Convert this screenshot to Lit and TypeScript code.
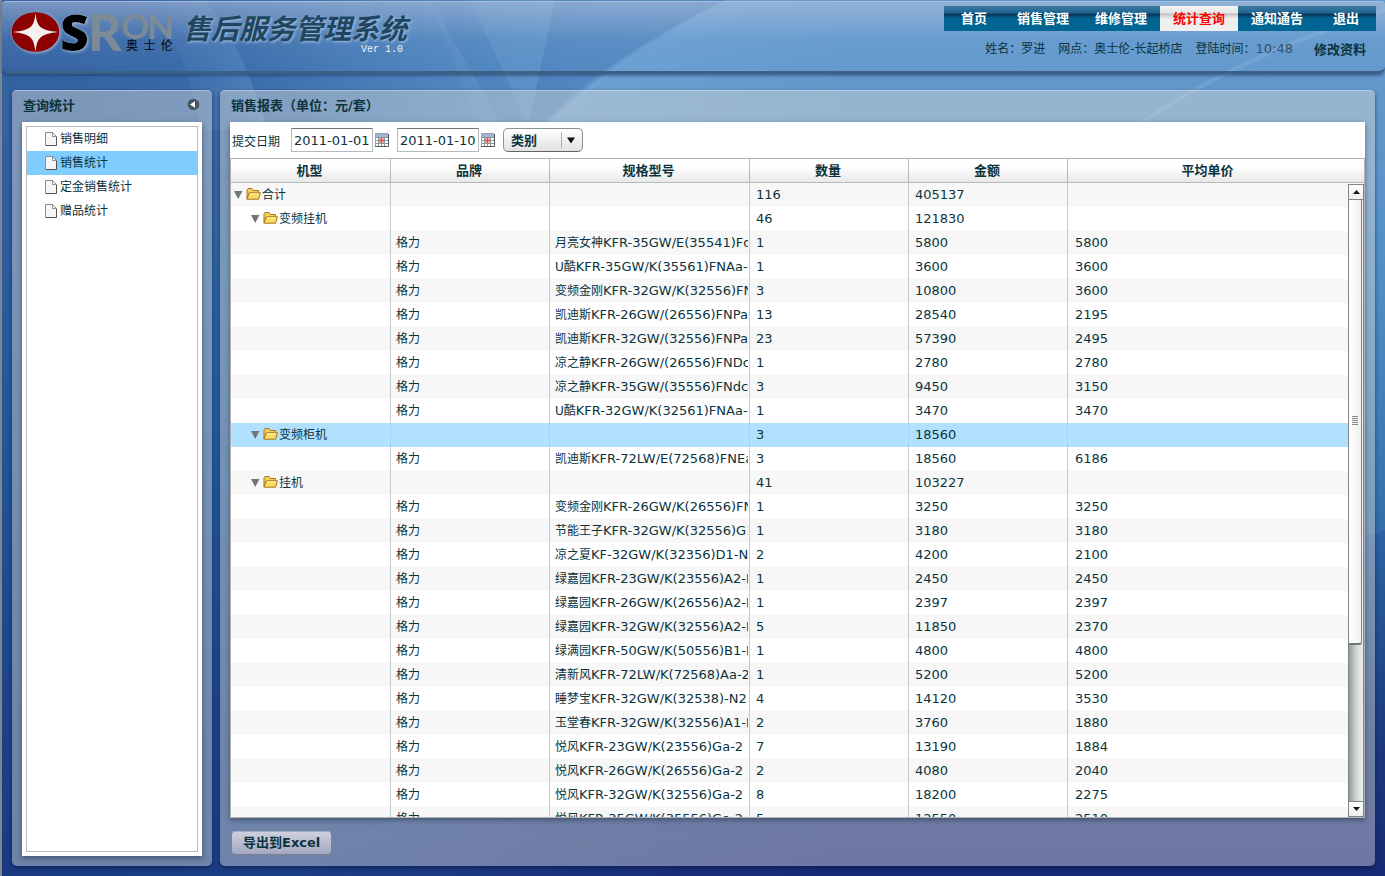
import { LitElement, html, svg, css, nothing } from "lit";
import { customElement, state } from "lit/decorators.js";
import { classMap } from "lit/directives/class-map.js";

interface Row {
  group?: string;
  level?: number;
  brand?: string;
  name?: string;
  model?: string;
  tail?: string;
  qty: number;
  amount: number;
  price?: number;
}

const item = (name: string, model: string, qty: number, amount: number, price: number, tail = ""): Row => ({
  brand: "格力", name, model, qty, amount, price, tail,
});

const ROWS: Row[] = [
  { group: "合计", level: 0, qty: 116, amount: 405137 },
  { group: "变频挂机", level: 1, qty: 46, amount: 121830 },
  item("月亮女神", "KFR-35GW/E(35541)Fd", 1, 5800, 5800),
  item("U酷", "KFR-35GW/K(35561)FNAa-3", 1, 3600, 3600),
  item("变频金刚", "KFR-32GW/K(32556)FN", 3, 10800, 3600),
  item("凯迪斯", "KFR-26GW/(26556)FNPa-", 13, 28540, 2195),
  item("凯迪斯", "KFR-32GW/(32556)FNPa-", 23, 57390, 2495),
  item("凉之静", "KFR-26GW/(26556)FNDc-", 1, 2780, 2780),
  item("凉之静", "KFR-35GW/(35556)FNdc-", 3, 9450, 3150),
  item("U酷", "KFR-32GW/K(32561)FNAa-3", 1, 3470, 3470),
  { group: "变频柜机", level: 1, qty: 3, amount: 18560 },
  item("凯迪斯", "KFR-72LW/E(72568)FNEa", 3, 18560, 6186),
  { group: "挂机", level: 1, qty: 41, amount: 103227 },
  item("变频金刚", "KFR-26GW/K(26556)FN", 1, 3250, 3250),
  item("节能王子", "KFR-32GW/K(32556)G1", 1, 3180, 3180),
  item("凉之夏", "KF-32GW/K(32356)D1-N1", 2, 4200, 2100),
  item("绿嘉园", "KFR-23GW/K(23556)A2-N", 1, 2450, 2450),
  item("绿嘉园", "KFR-26GW/K(26556)A2-N", 1, 2397, 2397),
  item("绿嘉园", "KFR-32GW/K(32556)A2-N", 5, 11850, 2370),
  item("绿满园", "KFR-50GW/K(50556)B1-N", 1, 4800, 4800),
  item("清新风", "KFR-72LW/K(72568)Aa-2", 1, 5200, 5200),
  item("睡梦宝", "KFR-32GW/K(32538)-N2", 4, 14120, 3530, "白"),
  item("玉堂春", "KFR-32GW/K(32556)A1-N", 2, 3760, 1880),
  item("悦风", "KFR-23GW/K(23556)Ga-2", 7, 13190, 1884),
  item("悦风", "KFR-26GW/K(26556)Ga-2", 2, 4080, 2040),
  item("悦风", "KFR-32GW/K(32556)Ga-2", 8, 18200, 2275),
  item("悦风", "KFR-35GW/K(35556)Ga-2", 5, 12550, 2510),
];

const fonts = css`
  :host {
    font-family: "DejaVu Sans", "Noto Sans CJK SC", sans-serif;
    color: #0b333c;
  }
  * {
    box-sizing: border-box;
  }
  button,
  input,
  select {
    font: inherit;
    color: inherit;
    margin: 0;
  }
`;

@customElement("app-backdrop")
class AppBackdrop extends LitElement {
  static styles = css`
    :host {
      display: block;
    }
    svg {
      display: block;
      width: 100%;
      height: 100%;
    }
  `;
  render() {
    return html`<svg viewBox="0 0 1385 876" preserveAspectRatio="none" aria-hidden="true">
      <defs>
        <linearGradient id="base" x1="0" y1="0" x2="0" y2="1">
          <stop offset="0" stop-color="#649bd0" />
          <stop offset=".15" stop-color="#5f97ca" />
          <stop offset=".35" stop-color="#4a86bd" />
          <stop offset=".55" stop-color="#2f6cac" />
          <stop offset=".72" stop-color="#245092" />
          <stop offset=".85" stop-color="#1c3880" />
          <stop offset="1" stop-color="#172a76" />
        </linearGradient>
        <linearGradient id="shade" x1="0" y1="0" x2="1" y2="0">
          <stop offset="0" stop-color="#1c4489" stop-opacity=".65" />
          <stop offset=".16" stop-color="#1c4a90" stop-opacity=".6" />
          <stop offset=".42" stop-color="#2a62a4" stop-opacity=".12" />
          <stop offset=".6" stop-color="#2a62a4" stop-opacity="0" />
        </linearGradient>
        <linearGradient id="beam" x1="0" y1="0" x2="1" y2="0">
          <stop offset="0" stop-color="#9ccdf2" stop-opacity="0" />
          <stop offset="1" stop-color="#9ccdf2" stop-opacity=".2" />
        </linearGradient>
        <linearGradient id="ray" x1="0" y1="0" x2="1" y2="0">
          <stop offset="0" stop-color="#9ccdf2" stop-opacity=".3" />
          <stop offset=".4" stop-color="#9ccdf2" stop-opacity="0" />
        </linearGradient>
      </defs>
      <rect width="1385" height="876" fill="url(#base)" />
      <rect width="1385" height="876" fill="url(#shade)" />
      <path d="M150 0H205Q240 40 268 130H200Q190 60 150 0Z" fill="url(#beam)" />
      <path d="M430 0H700L545 130H480Z" fill="#9ccdf2" opacity=".07" />
      <path d="M430 0H470L530 130H505Z" fill="#1f5799" opacity=".14" />
      <path d="M555 0H725Q600 60 525 140Z" fill="#1f5799" opacity=".2" />
      <path d="M725 0Q610 60 540 130H1300V0Z" fill="url(#ray)" />
      <path d="M1385 8Q1220 60 1130 130H1134Q1230 62 1385 12Z" fill="#b9dcf5" opacity=".16" />
      <path d="M1385 160V530Q1374 535 1360 536V160Z" fill="#6aa5d8" opacity=".16" />
    </svg>`;
  }
}

@customElement("app-header")
class AppHeader extends LitElement {
  @state() current = "统计查询";
  private items = ["首页", "销售管理", "维修管理", "统计查询", "通知通告", "退出"];

  static styles = [
    fonts,
    css`
      :host {
        display: block;
      }
      .bar {
        display: flex;
        justify-content: space-between;
        height: 73px;
        padding: 4px 9px 0 8px;
        border-top: 1px solid #a3bede;
        border-bottom: 3px solid #3d6087;
        border-radius: 4px 4px 7px 7px;
        background: linear-gradient(rgba(190, 200, 222, 0.5), rgba(150, 175, 215, 0.12) 55%, rgba(130, 160, 210, 0.03));
        box-shadow: 0 2px 3px rgba(20, 45, 85, 0.45);
      }
      .brand {
        display: flex;
        gap: 7px;
      }
      .logo {
        display: block;
        width: 166px;
        height: 56px;
      }
      .titles {
        display: flex;
        flex-direction: column;
        align-items: flex-end;
      }
      h1 {
        margin: 4px 0 0;
        font: italic 700 28px/34px "Noto Sans CJK SC", sans-serif;
        color: #1f4560;
        text-shadow: 1px 1px 3px #a9c6e2;
      }
      .version {
        margin-right: 4px;
        font: 10px/12px "Liberation Mono", monospace;
        color: #eef3f8;
      }
      .side {
        display: flex;
        flex-direction: column;
        align-items: flex-end;
      }
      nav {
        display: flex;
        background: linear-gradient(#3a7ba4, #1f6590 7px, #0a3458 8px, #0b3a60 9px, #00628f 12px, #006694);
      }
      nav button {
        min-width: 60px;
        height: 25px;
        padding: 0 13px;
        border: 0;
        background: none;
        color: #fff;
        font-weight: 700;
        font-size: 13px;
        line-height: 25px;
      }
      nav .active {
        color: #f00;
        background: linear-gradient(#f4f4f4, #e6e6e6 7px, #bcbcbc 8px, #dadada 10px, #f0f0f0 13px, #efefef);
      }
      .user {
        display: flex;
        gap: 13px;
        align-items: center;
        margin: 6px 10px 0 0;
        font-size: 12px;
        line-height: 20px;
      }
      .clock {
        font-size: 13px;
        color: #33505f;
      }
      .user a {
        margin-left: 8px;
        padding-top: 3px;
        color: inherit;
        font-weight: 700;
        font-size: 13px;
        text-decoration: none;
      }
    `,
  ];

  render() {
    return html`<header class="bar">
      <div class="brand">
        <svg class="logo" viewBox="10 5 166 56" role="img" aria-label="SRON 奥士伦">
          <defs>
            <filter id="glow" x="-20%" y="-20%" width="140%" height="150%">
              <feDropShadow dx="1" dy="1" stdDeviation="1.5" flood-color="#b4c8e4" flood-opacity=".8" />
            </filter>
          </defs>
          <g filter="url(#glow)">
            <ellipse cx="35.5" cy="31" rx="24" ry="20" fill="#8c0204" />
            <path
              d="M35.5 12C37 26 40 29 58 31C40 33 37 37 35.5 51C34 37 31 33 13 31C31 29 34 26 35.5 12Z"
              fill="#f4f0f0"
            />
            <text x="60" y="50" font-family="Open Sans" font-weight="800" font-size="50" fill="#000">S</text>
          </g>
          <g fill="#7b8b98" font-family="Lato">
            <text x="88" y="50" font-weight="900" font-size="52">R</text>
            <text x="121" y="38" font-weight="700" font-size="35">O</text>
            <text x="147" y="38" font-weight="700" font-size="35">N</text>
          </g>
          <text x="126" y="49" font-family="Noto Sans CJK SC" font-size="12" fill="#000">奥&#160;&#160;士&#160;&#160;伦</text>
        </svg>
        <div class="titles">
          <h1>售后服务管理系统</h1>
          <span class="version">Ver 1.0</span>
        </div>
      </div>
      <div class="side">
        <nav>
          ${this.items.map(
            (t) => html`<button
              class=${classMap({ active: t === this.current })}
              @click=${() => (this.current = t)}
            >${t}</button>`,
          )}
        </nav>
        <div class="user">
          <span>姓名：罗进</span>
          <span>网点：奥士伦-长起桥店</span>
          <span>登陆时间：<span class="clock">10:48</span></span>
          <a href="#">修改资料</a>
        </div>
      </div>
    </header>`;
  }
}

const panel = css`
  .panel {
    height: 100%;
    display: flex;
    flex-direction: column;
    padding: 0 10px 10px;
    border-radius: 5px;
    background: rgba(216, 216, 216, 0.45);
    box-shadow:
      inset 0 1px 0 rgba(235, 240, 250, 0.4),
      0 2px 4px rgba(10, 25, 60, 0.6);
  }
  h2 {
    margin: 0;
    font-size: 13px;
    line-height: 32px;
    font-weight: 700;
  }
`;

@customElement("report-menu")
class ReportMenu extends LitElement {
  @state() current = "销售统计";
  private items = ["销售明细", "销售统计", "定金销售统计", "赠品统计"];

  static styles = [
    fonts,
    panel,
    css`
      :host {
        display: block;
      }
      .head {
        display: flex;
        justify-content: space-between;
        align-items: center;
        padding: 0 2px 0 1px;
      }
      .fold {
        width: 13px;
        height: 13px;
        padding: 0;
        border: 0;
        background: none;
        margin-bottom: 3px;
      }
      .fold svg,
      .entry svg {
        display: block;
      }
      .frame {
        flex: 1;
        padding: 4px;
        background: #fff;
        box-shadow: 0 2px 5px rgba(20, 35, 60, 0.5);
      }
      ul {
        height: 100%;
        margin: 0;
        padding: 0;
        border: 1px solid #b7babc;
        list-style: none;
      }
      .entry {
        display: flex;
        align-items: center;
        gap: 2px;
        width: 100%;
        height: 24px;
        padding: 0 0 0 17px;
        border: 0;
        background: none;
        font-size: 12px;
        line-height: 24px;
      }
      .active {
        background: #7fceff;
      }
    `,
  ];

  render() {
    return html`<section class="panel">
      <div class="head">
        <h2>查询统计</h2>
        <button class="fold" aria-label="收起">
          <svg width="13" height="13" viewBox="0 0 13 13">
            <circle cx="6.5" cy="6.5" r="5.8" fill="#4a5463" />
            <path d="M3 6.5L8 3.2V9.8Z" fill="#fff" />
          </svg>
        </button>
      </div>
      <div class="frame">
        <ul>
          ${this.items.map(
            (t) => html`<li>
              <button
                class=${classMap({ entry: true, active: t === this.current })}
                @click=${() => (this.current = t)}
              >
                <svg width="14" height="16" viewBox="0 0 14 16" aria-hidden="true">
                  <path d="M1.5 1.5H8.5L12.5 5.5V14.5H1.5Z" fill="#f6f6f6" stroke="#8c8c8c" />
                  <path d="M2 14.5H12.5V6" fill="none" stroke="#555" />
                  <path d="M8.5 1.5V5.5H12.5Z" fill="#fff" stroke="#777" stroke-width=".8" />
                </svg>
                <span>${t}</span>
              </button>
            </li>`,
          )}
        </ul>
      </div>
    </section>`;
  }
}

@customElement("sales-table")
class SalesTable extends LitElement {
  @state() selected = 10;

  static styles = [
    fonts,
    css`
      :host {
        display: block;
        position: relative;
        min-height: 0;
        overflow: hidden;
        border: 1px solid #b0b3b5;
        background: #fff;
      }
      table {
        width: 100%;
        table-layout: fixed;
        border-collapse: separate;
        border-spacing: 0;
      }
      .kind,
      .brand,
      .qty,
      .amount {
        width: 159px;
      }
      .kind {
        width: 160px;
      }
      .model {
        width: 200px;
      }
      th {
        height: 24px;
        padding: 0 2px 0 0;
        border-right: 1px solid #b7babc;
        border-bottom: 1px solid #b7babc;
        background: linear-gradient(#fff 30%, #e8e8e8);
        font-size: 13px;
        line-height: 23px;
        font-weight: 700;
      }
      th:last-child {
        padding-right: 17px;
        border-right: 0;
      }
      td {
        height: 24px;
        padding: 0 1px 0 6px;
        border-right: 1px solid #c9cccd;
        font-size: 13px;
        line-height: 24px;
        white-space: nowrap;
      }
      td:last-child {
        padding-left: 7px;
        border-right: 0;
      }
      tr:nth-child(odd) td {
        background: #f7f7f7;
      }
      tr.selected td {
        background: #b2e1ff;
        border-right-color: #a9d3ec;
      }
      .cjk {
        font-size: 12px;
      }
      td.text {
        padding-left: 5px;
      }
      .clip {
        height: 24px;
        overflow: hidden;
      }
      .clip span {
        vertical-align: top;
      }
      td.tree {
        padding-left: 2px;
      }
      .node {
        display: flex;
        align-items: center;
        gap: 1px;
        height: 24px;
        font-size: 12px;
      }
      .node.deep {
        padding-left: 17px;
      }
      .node svg {
        flex: none;
        margin-bottom: 2px;
      }
      .toggle {
        display: flex;
        width: 12px;
        height: 12px;
        padding: 0;
        border: 0;
        background: none;
      }
      .scroll {
        position: absolute;
        top: 25px;
        right: 0;
        bottom: 0;
        width: 16px;
        display: flex;
        flex-direction: column;
        border: 1px solid #808588;
        background: linear-gradient(90deg, #949a9c, #cfd2d3 50%, #eee);
      }
      .scroll button {
        flex: none;
        display: grid;
        place-items: center;
        height: 15px;
        padding: 0;
        border: 0 solid #808588;
        background: linear-gradient(#fff, #eee);
      }
      .scroll .up {
        border-bottom-width: 1px;
      }
      .scroll .down {
        border-top-width: 1px;
      }
      .track {
        flex: 1;
        display: flex;
        flex-direction: column;
      }
      .thumb {
        height: 74%;
        display: grid;
        place-items: center;
        margin-right: 1px;
        border-right: 1px solid #808588;
        border-bottom: 2px solid #6f7578;
        border-radius: 0 0 3px 0;
        background: linear-gradient(90deg, #fff, #f0f0f0);
      }
    `,
  ];

  private renderNode(row: Row) {
    return html`<div class=${classMap({ node: true, deep: row.level === 1 })}>
      <button class="toggle" aria-label="展开">
        <svg width="12" height="12" viewBox="0 0 12 12"><path d="M1 2H9.5L5.2 10Z" fill="#6f777a" /></svg>
      </button>
      <svg width="15" height="14" viewBox="0 0 15 14" aria-hidden="true">
        <path d="M1 12V3L2 1.5H6L7.5 3.5H12.5V6" fill="#f3cf5a" stroke="#a8741a" />
        <path d="M1 12.2L3.2 5.8H14.4L12.6 12.2Z" fill="#fbdc62" stroke="#a8741a" />
        <path d="M4 6.9H13" stroke="#fff6c4" />
      </svg>
      <span>${row.group}</span>
    </div>`;
  }

  render() {
    return html`<table>
        <thead>
          <tr>
            <th class="kind">机型</th>
            <th class="brand">品牌</th>
            <th class="model">规格型号</th>
            <th class="qty">数量</th>
            <th class="amount">金额</th>
            <th>平均单价</th>
          </tr>
        </thead>
        <tbody>
          ${ROWS.map(
            (r, i) => html`<tr
              class=${classMap({ selected: i === this.selected })}
              @click=${() => (this.selected = i)}
            >
              <td class="tree">${r.group ? this.renderNode(r) : nothing}</td>
              <td class="text"><div class="clip"><span class="cjk">${r.brand ?? nothing}</span></div></td>
              <td class="text">
                <div class="clip"><span class="cjk">${r.name ?? nothing}</span><span>${r.model ?? nothing}</span><span class="cjk">${r.tail || nothing}</span></div>
              </td>
              <td>${r.qty}</td>
              <td>${r.amount}</td>
              <td>${r.price ?? nothing}</td>
            </tr>`,
          )}
        </tbody>
      </table>
      <div class="scroll">
        <button class="up" aria-label="向上">
          <svg width="7" height="4" viewBox="0 0 7 4"><path d="M0 4L3.5 0L7 4Z" fill="#111" /></svg>
        </button>
        <div class="track">
          <div class="thumb">
            <svg width="6" height="10" viewBox="0 0 6 10">
              ${[0, 2, 4, 6, 8].map((y) => svg`<rect y=${y} width="6" height="1" fill="#888" />`)}
            </svg>
          </div>
        </div>
        <button class="down" aria-label="向下">
          <svg width="7" height="4" viewBox="0 0 7 4"><path d="M0 0L3.5 4L7 0Z" fill="#111" /></svg>
        </button>
      </div>`;
  }
}

@customElement("sales-report")
class SalesReport extends LitElement {
  static styles = [
    fonts,
    panel,
    css`
      :host {
        display: block;
        min-width: 0;
      }
      h2 {
        padding-left: 1px;
      }
      .body {
        flex: 1;
        min-height: 0;
        display: flex;
        flex-direction: column;
        background: #fff;
        box-shadow: 0 2px 5px rgba(20, 35, 60, 0.5);
      }
      .filters {
        flex: none;
        display: flex;
        align-items: center;
        height: 36px;
        padding-left: 2px;
      }
      label {
        margin-right: 11px;
        font-size: 12px;
      }
      .date {
        display: flex;
        align-items: center;
        gap: 2px;
        margin-right: 7px;
      }
      input {
        width: 82px;
        height: 24px;
        padding: 0 2px;
        border: 1px solid #b7babc;
        border-top-color: #6f7777;
        background: #fff;
        font-size: 13px;
      }
      .pick {
        width: 15px;
        height: 15px;
        padding: 0;
        border: 0;
        background: none;
      }
      .pick svg {
        display: block;
      }
      .category {
        display: grid;
        align-items: center;
      }
      .category > * {
        grid-area: 1 / 1;
      }
      .category svg {
        justify-self: end;
        pointer-events: none;
      }
      select {
        appearance: none;
        width: 80px;
        height: 24px;
        padding: 0 7px;
        border: 1px solid #8a9193;
        border-bottom-color: #5f6668;
        border-radius: 5px;
        background: linear-gradient(#fff, #e2e2e2);
        font-size: 13px;
        font-weight: 700;
      }
      sales-table {
        flex: 1;
      }
      .export {
        flex: none;
        align-self: flex-start;
        height: 24px;
        margin: 13px 0 1px 1px;
        padding: 0 11px;
        border: 1px solid #7b7f92;
        border-top-color: #a5abc4;
        border-radius: 4px;
        background: linear-gradient(#ced0de, #a3a8c2);
        font-size: 13px;
        font-weight: 700;
        line-height: 22px;
      }
    `,
  ];

  private renderDate(id: string, value: string, label: string) {
    return html`<div class="date">
      <input id=${id} type="text" aria-label=${label} .value=${value} />
      <button class="pick" aria-label="选择日期">
        <svg width="15" height="15" viewBox="0 0 15 15">
          <rect x="1" y="1" width="12" height="12" fill="#fff" />
          <rect x="1" y="1" width="12" height="3" fill="#9eb4d4" />
          <rect x="4" y="5" width="5" height="5" fill="#f8a0a0" />
          <path d="M1 4.5H13M1 7.5H13M1 10.5H13M3.5 4V13M6.5 4V13M9.5 4V13" stroke="#8f9499" />
          <path d="M4 7.5H9M6.5 5V10" stroke="#ee4444" />
          <path d="M.5 13V.5H13" fill="none" stroke="#9aa3ad" />
          <path d="M0 13.5H13.5V1" fill="none" stroke="#4f565c" />
        </svg>
      </button>
    </div>`;
  }

  render() {
    return html`<section class="panel">
      <h2>销售报表（单位：元/套）</h2>
      <div class="body">
        <div class="filters">
          <label for="from">提交日期</label>
          ${this.renderDate("from", "2011-01-01", "开始日期")}
          ${this.renderDate("to", "2011-01-10", "结束日期")}
          <div class="category">
            <select aria-label="类别">
              <option>类别</option>
            </select>
            <svg width="22" height="18" viewBox="0 0 22 18">
              <path d="M.5 1V17" stroke="#a9adaf" />
              <path d="M6 6.5H14L10 12.5Z" fill="#111" />
            </svg>
          </div>
        </div>
        <sales-table></sales-table>
      </div>
      <button class="export">导出到Excel</button>
    </section>`;
  }
}

@customElement("app-root")
class AppRoot extends LitElement {
  static styles = css`
    :host {
      display: block;
      position: relative;
      isolation: isolate;
      height: 100vh;
      overflow: hidden;
    }
    app-backdrop {
      position: absolute;
      inset: 0;
      z-index: -1;
    }
    .page {
      display: flex;
      flex-direction: column;
      height: 100%;
      padding-top: 1px;
      border-left: 2px solid #7d8794;
      box-sizing: border-box;
    }
    main {
      flex: 1;
      min-height: 0;
      display: grid;
      grid-template-columns: 200px minmax(0, 1fr);
      grid-template-rows: minmax(0, 1fr);
      gap: 8px;
      padding: 16px 10px 10px;
    }
  `;

  render() {
    return html`<app-backdrop></app-backdrop>
      <div class="page">
        <app-header></app-header>
        <main>
          <report-menu></report-menu>
          <sales-report></sales-report>
        </main>
      </div>`;
  }
}
